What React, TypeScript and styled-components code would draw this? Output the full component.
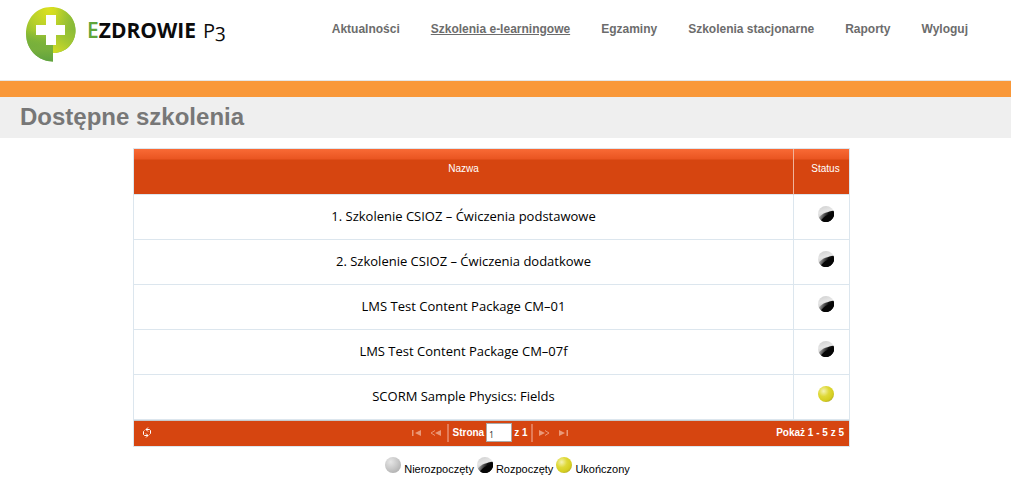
import React from "react";
import styled, { createGlobalStyle } from "styled-components";

const GlobalStyle = createGlobalStyle`
  * { box-sizing: border-box; }
  body {
    margin: 0;
    background: #fff;
    color: #000;
    font-family: "Liberation Sans", Arial, sans-serif;
    font-size: 11px;
  }
`;

const Header = styled.header`
  display: flex;
  align-items: flex-start;
  justify-content: space-between;
  height: 81px;
  padding: 6px 43px 0 24px;
  border-bottom: 1px solid #e6e6e6;
`;

const Brand = styled.a`
  display: flex;
  gap: 10px;
  color: #0b0b0b;
  text-decoration: none;
`;

const BrandName = styled.span`
  margin-top: 10px;
  font: 700 21px/28px "Open Sans", "Noto Sans", sans-serif;
  white-space: nowrap;
`;

const BrandAccent = styled.span`
  color: #5fa53a;
  font-weight: 600;
`;

const BrandSuffix = styled.span`
  margin-left: 7px;
  font-size: 20px;
  font-weight: 400;
  font-variant-numeric: oldstyle-nums;
`;

const Nav = styled.nav`
  display: flex;
  gap: 31px;
  margin-top: 15px;
`;

const NavLink = styled.a<{ $active?: boolean }>`
  color: #6c6c6c;
  font-size: 12px;
  font-weight: 700;
  line-height: 16px;
  white-space: nowrap;
  text-decoration: ${(p) => (p.$active ? "underline" : "none")};
`;

const Stripe = styled.div`
  height: 16px;
  background: #f99839;
`;

const PageTitle = styled.h1`
  margin: 0;
  padding: 0 20px 1px;
  background: #efefef;
  color: #777;
  font-size: 24px;
  line-height: 40px;
`;

const Main = styled.main`
  padding: 10px 28px 0 0;
`;

const Grid = styled.section`
  max-width: 717px;
  margin: 0 auto;
  border: 1px solid #dce6ee;
`;

const Table = styled.table`
  width: 100%;
  table-layout: fixed;
  border-collapse: separate;
  border-spacing: 0;
`;

const HeadCell = styled.th<{ $status?: boolean }>`
  width: ${(p) => (p.$status ? "56px" : "auto")};
  height: 46px;
  padding: ${(p) => (p.$status ? "0 0 6px 8px" : "0 0 6px")};
  border-left: ${(p) => (p.$status ? "1px solid #f0b49c" : "0")};
  border-bottom: 1px solid #dce6ee;
  background: linear-gradient(#f96a35 0, #ea5521 10px, #d64510 11px, #d64510 100%);
  color: #fff;
  font-size: 10px;
  font-weight: 400;
  line-height: 14px;
`;

const Cell = styled.td<{ $status?: boolean }>`
  height: 45px;
  padding: ${(p) => (p.$status ? "0 0 8px 8px" : "0 0 2px")};
  border-left: ${(p) => (p.$status ? "1px solid #dce6ee" : "0")};
  border-bottom: 1px solid #dce6ee;
  font: 13px/16px "Open Sans", "Noto Sans", sans-serif;
  text-align: center;
`;

const Pager = styled.footer`
  display: grid;
  grid-template-columns: 1fr auto 1fr;
  align-items: center;
  height: 26px;
  padding: 0 5px 2px 6px;
  border-top: 1px solid #c5c9cc;
  background: #d64510;
  color: #fff;
  font-size: 10px;
  font-weight: 700;
`;

const IconButton = styled.button`
  display: flex;
  align-items: center;
  justify-content: center;
  width: 14px;
  height: 16px;
  padding: 0;
  border: 0;
  background: none;
  color: inherit;

  &:disabled { color: #ea9878; }
`;

const PagerControls = styled.div`
  display: flex;
  align-items: center;
  gap: 5px;
  padding-right: 4px;
`;

const Separator = styled.span`
  width: 2px;
  height: 18px;
  background: #e47c58;
`;

const PageLabel = styled.label`
  display: flex;
  align-items: center;
  gap: 2px;
  margin: 0 -2px;
`;

const PageInput = styled.input`
  width: 26px;
  height: 19px;
  padding: 3px 2px 0;
  border: 1px solid #a9a9a9;
  border-radius: 0;
  background: #fff;
  color: #333;
  font: 8px "Noto Sans", sans-serif;
`;

const Summary = styled.span`
  justify-self: end;
`;

const Legend = styled.ul`
  display: flex;
  justify-content: center;
  gap: 3px;
  margin: 10px 0 0;
  padding: 0 0 0 32px;
  list-style: none;
`;

const LegendItem = styled.li`
  display: flex;
  gap: 3px;
  line-height: 12px;

  span { padding-top: 6px; }
`;

const BallSvg = styled.svg`
  display: inline-block;
  vertical-align: middle;
`;

type Status = "idle" | "started" | "done";

const ballLabels: Record<Status, string> = {
  idle: "Nierozpoczęty",
  started: "Rozpoczęty",
  done: "Ukończony",
};

function GradientDefs() {
  return (
    <svg width="0" height="0" style={{ position: "absolute" }} aria-hidden="true">
      <defs>
        <radialGradient id="ball-grey" cx="0.35" cy="0.3" r="0.75">
          <stop offset="0" stopColor="#e6e6e6" />
          <stop offset="0.6" stopColor="#c8c8c8" />
          <stop offset="1" stopColor="#b2b2b2" />
        </radialGradient>
        <radialGradient id="ball-yellow" cx="0.35" cy="0.32" r="0.75">
          <stop offset="0" stopColor="#f5f3b4" />
          <stop offset="0.45" stopColor="#dfd938" />
          <stop offset="0.8" stopColor="#d5ce20" />
          <stop offset="1" stopColor="#b3ac2c" />
        </radialGradient>
        <linearGradient id="ball-light" x1="0.3" y1="0" x2="0.6" y2="1">
          <stop offset="0" stopColor="#d2d2d2" />
          <stop offset="0.35" stopColor="#e6e6e6" />
          <stop offset="1" stopColor="#a8a8a8" />
        </linearGradient>
        <linearGradient id="ball-dark" gradientUnits="userSpaceOnUse" x1="2" y1="8" x2="9" y2="11">
          <stop offset="0" stopColor="#b4b4b4" />
          <stop offset="0.4" stopColor="#6a6a6a" />
          <stop offset="1" stopColor="#101010" />
        </linearGradient>
      </defs>
    </svg>
  );
}

function Ball({ status, decorative }: { status: Status; decorative?: boolean }) {
  return (
    <BallSvg
      width="16"
      height="16"
      viewBox="0 0 16 16"
      role="img"
      aria-hidden={decorative}
      aria-label={decorative ? undefined : ballLabels[status]}
    >
      {status === "idle" && <circle cx="8" cy="8" r="8" fill="url(#ball-grey)" />}
      {status === "done" && <circle cx="8" cy="8" r="8" fill="url(#ball-yellow)" />}
      {status === "started" && (
        <>
          <circle cx="8" cy="8" r="8" fill="url(#ball-light)" />
          <path d="M0.800 11.400C2.500 9.400 5 7.800 7.500 6.800C10 5.800 13 5 15.300 4.700A8 8 0 0 1 2.500 13.800Z" fill="url(#ball-dark)" />
          <path d="M9.500 9C12 8 14 6.500 15.300 4.700A8 8 0 0 1 3 14.200C5 12.500 6.500 10 9.500 9Z" fill="#060606" />
        </>
      )}
    </BallSvg>
  );
}

function LogoMark() {
  return (
    <svg width="53" height="57" viewBox="0 0 53 57" aria-hidden="true">
      <defs>
        <radialGradient id="leaf" gradientUnits="userSpaceOnUse" cx="25" cy="4" r="44">
          <stop offset="0" stopColor="#dce01e" />
          <stop offset="0.45" stopColor="#b5cf2b" />
          <stop offset="1" stopColor="#6fae3c" />
        </radialGradient>
        <linearGradient id="leaf-fold" gradientUnits="userSpaceOnUse" x1="51" y1="20" x2="31" y2="46">
          <stop offset="0" stopColor="#86b939" />
          <stop offset="0.5" stopColor="#a2c732" />
          <stop offset="1" stopColor="#cfdb25" />
        </linearGradient>
        <linearGradient id="leaf-side" gradientUnits="userSpaceOnUse" x1="30" y1="20" x2="51" y2="22">
          <stop offset="0" stopColor="#8dbb38" stopOpacity="0" />
          <stop offset="1" stopColor="#86b939" />
        </linearGradient>
        <linearGradient id="leaf-left" x1="0" y1="0" x2="0" y2="1">
          <stop offset="0" stopColor="#6aaa3d" stopOpacity="0" />
          <stop offset="0.600" stopColor="#79b03c" />
          <stop offset="1" stopColor="#5fa240" />
        </linearGradient>
      </defs>
      <path d="M27 1C41 1 51.500 11.500 51.500 24.500C51.500 37 42 47 29 47V55.500C14 55.500 2 43 2 28C2 12 13 1 27 1Z" fill="url(#leaf)" />
      <path d="M29 1C42 2 51.500 12 51.500 24.500H29Z" fill="url(#leaf-side)" />
      <path d="M29 24.500H51.500C51.500 37 42 47 29 47Z" fill="url(#leaf-fold)" />
      <path d="M2 24H29V55.500C14 55.500 2 43 2 28Z" fill="url(#leaf-left)" />
      <path d="M22 9H32V19H41V29H32V39H22V29H12V19H22Z" fill="#fff" />
    </svg>
  );
}

function RefreshIcon() {
  return (
    <svg width="10" height="11" viewBox="0 0 10 11" fill="none" stroke="currentColor" aria-hidden="true">
      <path d="M3.500 8.500H2.500L1.500 7.500V4.500L2.500 3.500M6.500 2.500H7.500L8.500 3.500V6.500L7.500 7.500M6 0.500L4 2.500L6 4.500M4 2.500H7M4 6.500L6 8.500L4 10.500M6 8.500H3" />
    </svg>
  );
}

function ArrowIcon({ kind }: { kind: "first" | "prev" | "next" | "last" }) {
  return (
    <svg width="11" height="6" viewBox="0 0 11 6" aria-hidden="true">
      {kind === "first" && <path d="M1 0H2.500V6H1ZM10 0V6L4 3Z" fill="currentColor" />}
      {kind === "last" && <path d="M10 0H8.500V6H10ZM1 0V6L7 3Z" fill="currentColor" />}
      {kind === "prev" && (
        <>
          <path d="M5 0.500L1 3L5 5.500" fill="none" stroke="currentColor" />
          <path d="M11 0V6L5 3Z" fill="currentColor" />
        </>
      )}
      {kind === "next" && (
        <>
          <path d="M0 0V6L6 3Z" fill="currentColor" />
          <path d="M6 0.500L10 3L6 5.500" fill="none" stroke="currentColor" />
        </>
      )}
    </svg>
  );
}

const navItems = [
  "Aktualności",
  "Szkolenia e-learningowe",
  "Egzaminy",
  "Szkolenia stacjonarne",
  "Raporty",
  "Wyloguj",
];

const courses: { name: string; status: Status }[] = [
  { name: "1. Szkolenie CSIOZ – Ćwiczenia podstawowe", status: "started" },
  { name: "2. Szkolenie CSIOZ – Ćwiczenia dodatkowe", status: "started" },
  { name: "LMS Test Content Package CM–01", status: "started" },
  { name: "LMS Test Content Package CM–07f", status: "started" },
  { name: "SCORM Sample Physics: Fields", status: "done" },
];

export default function App() {
  return (
    <>
      <GlobalStyle />
      <GradientDefs />
      <Header>
        <Brand href="#">
          <LogoMark />
          <BrandName>
            <BrandAccent>E</BrandAccent>ZDROWIE<BrandSuffix>P3</BrandSuffix>
          </BrandName>
        </Brand>
        <Nav>
          {navItems.map((item, i) => (
            <NavLink key={item} href="#" $active={i === 1}>{item}</NavLink>
          ))}
        </Nav>
      </Header>
      <Stripe />
      <PageTitle>Dostępne szkolenia</PageTitle>
      <Main>
        <Grid>
          <Table>
            <thead>
              <tr>
                <HeadCell scope="col">Nazwa</HeadCell>
                <HeadCell scope="col" $status>Status</HeadCell>
              </tr>
            </thead>
            <tbody>
              {courses.map((course) => (
                <tr key={course.name}>
                  <Cell>{course.name}</Cell>
                  <Cell $status><Ball status={course.status} /></Cell>
                </tr>
              ))}
            </tbody>
          </Table>
          <Pager>
            <IconButton type="button" aria-label="Odśwież"><RefreshIcon /></IconButton>
            <PagerControls>
              <IconButton type="button" disabled aria-label="Pierwsza"><ArrowIcon kind="first" /></IconButton>
              <IconButton type="button" disabled aria-label="Poprzednia"><ArrowIcon kind="prev" /></IconButton>
              <Separator />
              <PageLabel>
                Strona
                <PageInput defaultValue="1" />
                z 1
              </PageLabel>
              <Separator />
              <IconButton type="button" disabled aria-label="Następna"><ArrowIcon kind="next" /></IconButton>
              <IconButton type="button" disabled aria-label="Ostatnia"><ArrowIcon kind="last" /></IconButton>
            </PagerControls>
            <Summary>Pokaż 1 - 5 z 5</Summary>
          </Pager>
        </Grid>
        <Legend>
          {(["idle", "started", "done"] as Status[]).map((status) => (
            <LegendItem key={status}>
              <Ball status={status} decorative />
              <span>{ballLabels[status]}</span>
            </LegendItem>
          ))}
        </Legend>
      </Main>
    </>
  );
}
